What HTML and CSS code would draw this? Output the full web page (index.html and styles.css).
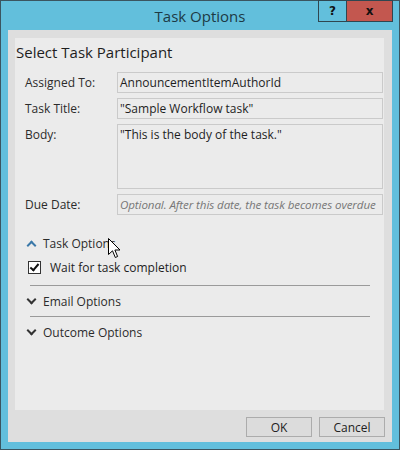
FILE: index.html
```html
<!DOCTYPE html>
<html>
  <head>
    <title>Task Options</title>
    <link rel="stylesheet" href="styles.css">
  </head>
  <body>
    <div class="window">
      <div class="titlebar">Task Options</div>
      <div class="caption-buttons">
        <span class="cap-btn help">?</span>
        <span class="cap-btn close">x</span>
      </div>

      <div class="client">
        <div class="panel">
          <div class="heading">Select Task Participant</div>

          <div class="form">
            <div class="row">
              <label class="lbl">Assigned To:</label>
              <div class="field">AnnouncementItemAuthorId</div>
            </div>
            <div class="row">
              <label class="lbl">Task Title:</label>
              <div class="field">"Sample Workflow task"</div>
            </div>
            <div class="row">
              <label class="lbl">Body:</label>
              <div class="field area">"This is the body of the task."</div>
            </div>
            <div class="row">
              <label class="lbl">Due Date:</label>
              <div class="field hint">Optional. After this date, the task becomes overdue</div>
            </div>
          </div>

          <div class="section">
            <div class="sec-head">
              <span class="chev up"></span>
              <span>Task Options</span>
            </div>
            <div class="check-row">
              <span class="checkbox"></span>
              <span>Wait for task completion</span>
            </div>
          </div>
          <div class="rule"></div>
          <div class="section">
            <div class="sec-head">
              <span class="chev"></span>
              <span>Email Options</span>
            </div>
          </div>
          <div class="rule"></div>
          <div class="section">
            <div class="sec-head">
              <span class="chev"></span>
              <span>Outcome Options</span>
            </div>
          </div>

          <!-- mouse pointer left over the section header -->
          <svg class="pointer" width="13" height="21" viewBox="0 0 13 21">
            <path d="M0.5 0.5 L0.5 16.5 L4.5 12.8 L7.3 19.5 L9.6 18.5 L6.9 12 L12 12 Z" fill="#fff" stroke="#000" stroke-width="1"/>
          </svg>
        </div>

        <div class="footer">
          <button class="btn">OK</button>
          <button class="btn">Cancel</button>
        </div>
      </div>
    </div>
  </body>
</html>
```

FILE: styles.css
```css
body {
  margin: 0;
  font-family: "Open Sans", "Liberation Sans", sans-serif;
  font-size: 12px;
  color: #1e1e1e;
}
.window {
  position: relative;
  width: 400px;
  height: 450px;
  box-sizing: border-box;
  border: 1px solid #3b5560;
  background-color: #62bfdc;
  padding: 0 7px 7px 7px;
  display: flex;
  flex-direction: column;
}
.titlebar {
  height: 29px;
  line-height: 30px;
  text-align: center;
  font-size: 15px;
  color: #1d3a44;
}
.caption-buttons {
  position: absolute;
  top: -1px;
  right: 6px;
  display: flex;
}
.cap-btn {
  height: 20px;
  border: 1px solid #2f4650;
  box-sizing: content-box;
  text-align: center;
  font-family: "DejaVu Sans", sans-serif;
  font-weight: bold;
  font-size: 12px;
  line-height: 20px;
  color: #111;
}
.help {
  width: 27px;
}
.close {
  width: 45px;
  border-left: none;
  background-color: #c3574f;
}
.client {
  flex: 1;
  background-color: #dedede;
  padding: 8px 8px 0 7px;
  display: flex;
  flex-direction: column;
}
.panel {
  position: relative;
  height: 372px;
  background-color: #ebebeb;
  padding: 2px 1px 0 0;
  box-sizing: border-box;
}
.heading {
  font-size: 15px;
  line-height: 24px;
  padding-left: 1px;
  color: #1e1e1e;
}
.form {
  margin-top: 8px;
  display: flex;
  flex-direction: column;
  gap: 5px;
}
.row {
  display: flex;
  align-items: flex-start;
}
.lbl {
  width: 92px;
  flex: none;
  padding-left: 10px;
  line-height: 21px;
  color: #2b2b2b;
}
.field {
  flex: 1;
  height: 21px;
  box-sizing: border-box;
  border: 1px solid #cacaca;
  padding: 0 2px;
  line-height: 19px;
  white-space: nowrap;
  overflow: hidden;
}
.area {
  height: 65px;
}
.hint {
  font-style: italic;
  font-size: 11.6px;
  color: #777;
  letter-spacing: -0.1px;
}
.section {
  padding-left: 12px;
}
.sec-head {
  display: flex;
  align-items: center;
  height: 20px;
  gap: 8px;
  color: #2b2b2b;
}
.form + .section {
  margin-top: 18px;
}
.chev {
  width: 5px;
  height: 5px;
  border-right: 2px solid #333;
  border-bottom: 2px solid #333;
  transform: rotate(45deg);
  margin: 0 0 3px 1px;
}
.chev.up {
  border-color: #3a78a8;
  transform: rotate(-135deg);
  margin: 4px 0 0 1px;
}
.check-row {
  display: flex;
  align-items: center;
  height: 20px;
  gap: 9px;
  padding-left: 1px;
  margin: 4px 0 8px 0;
}
.checkbox {
  width: 11px;
  height: 11px;
  border: 1px solid #333;
  background-color: #fff;
  position: relative;
}
.checkbox::after {
  content: "";
  position: absolute;
  left: 3px;
  top: 0px;
  width: 3px;
  height: 7px;
  border-right: 2px solid #111;
  border-bottom: 2px solid #111;
  transform: rotate(40deg);
}
.rule {
  height: 1px;
  background-color: #9a9a9a;
  margin: 5px 13px 5px 15px;
}
.pointer {
  position: absolute;
  left: 93px;
  top: 200px;
}
.footer {
  display: flex;
  justify-content: flex-end;
  gap: 7px;
  padding: 7px 0 0 0;
  margin-right: -1px;
}
.btn {
  width: 66px;
  height: 20px;
  box-sizing: border-box;
  border: 1px solid #acacac;
  background-color: #dcdcdc;
  font-family: "Open Sans", "Liberation Sans", sans-serif;
  font-size: 12px;
  color: #222;
  padding: 0;
}
```
